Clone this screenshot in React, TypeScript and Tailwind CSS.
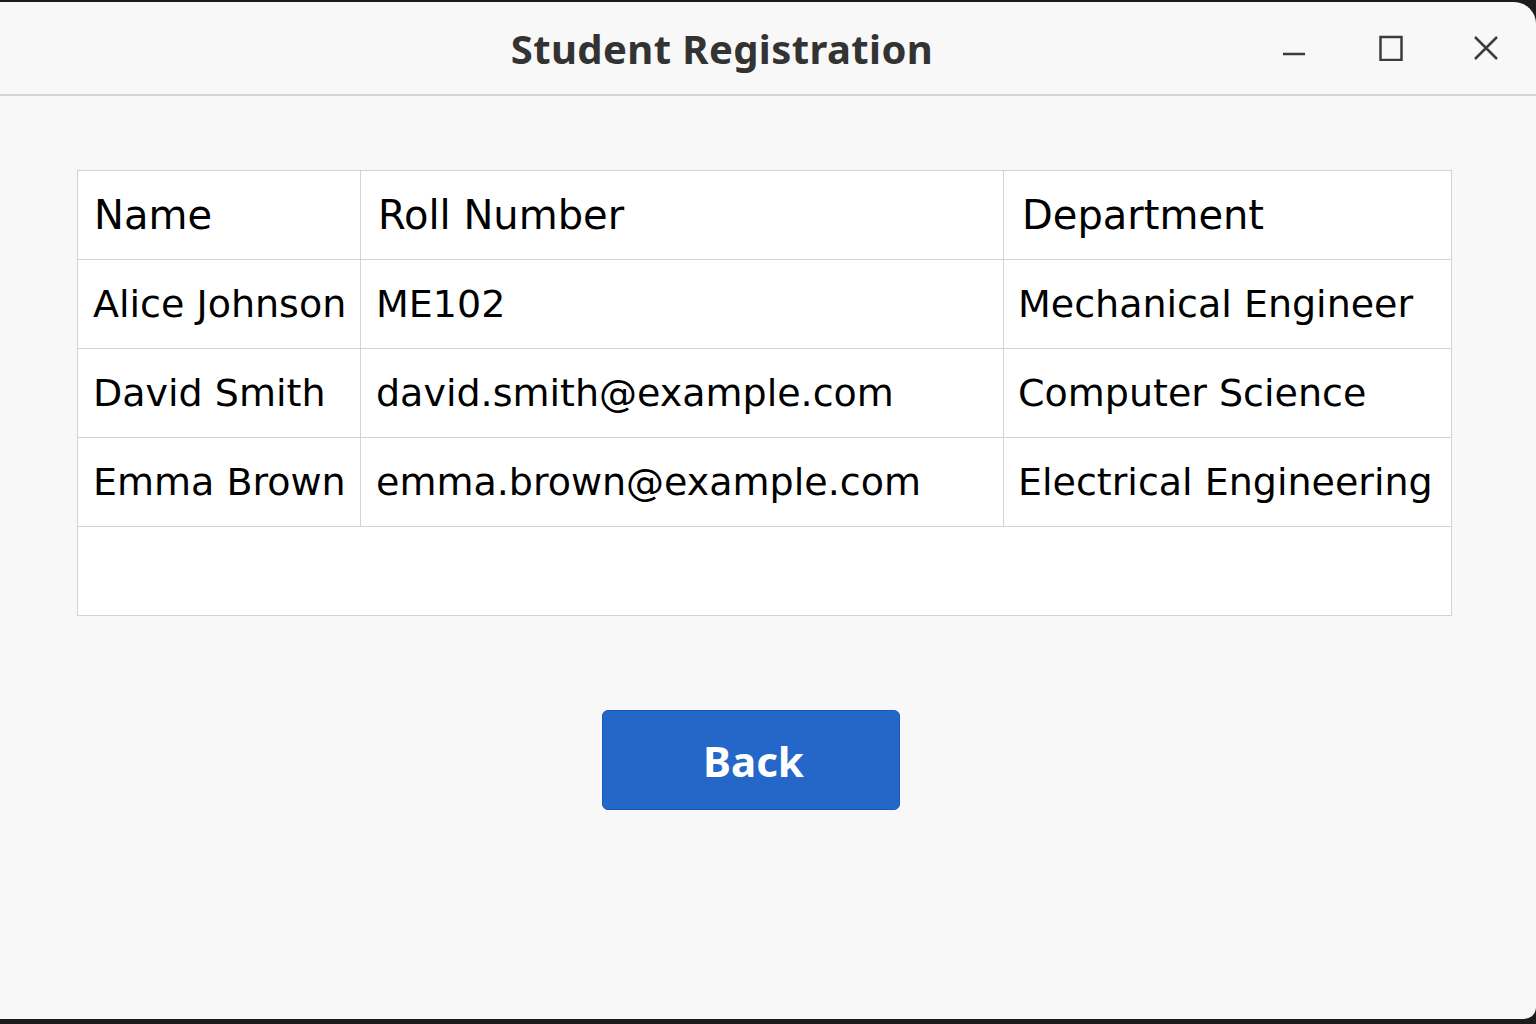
import React from "react";

// ─── Data ───────────────────────────────────────────────────────────────────
const HEADERS = ["Name", "Roll Number", "Department"];
const STUDENTS = [
  { name: "Alice Johnson", roll: "ME102", dept: "Mechanical Engineer" },
  { name: "David Smith", roll: "david.smith@example.com", dept: "Computer Science" },
  { name: "Emma Brown", roll: "emma.brown@example.com", dept: "Electrical Engineering" },
];

const cell = "h-[89px] border border-[#d2d2d2] align-middle whitespace-nowrap";

// ─── Title bar ──────────────────────────────────────────────────────────────
const TitleBar = () => (
  <div className="relative flex h-[94px] items-center justify-center border-b-2 border-[#d6d6d6]">
    <h1 className="ml-[-92px] mt-[2px] font-['Noto_Sans',sans-serif] text-[40px] font-bold tracking-[0.4px] text-[#333333]">
      Student Registration
    </h1>
    <div className="absolute right-[38px] top-[33px] flex items-center text-[#3c3c3c]">
      <svg width="24" height="26" viewBox="0 0 24 26">
        <line x1="1" y1="19" x2="23" y2="19" stroke="currentColor" strokeWidth="2.5" />
      </svg>
      <svg className="ml-[73px]" width="24" height="26" viewBox="0 0 24 26">
        <rect x="1.5" y="2" width="21" height="23" fill="none" stroke="currentColor" strokeWidth="2.5" />
      </svg>
      <svg className="ml-[71px]" width="24" height="26" viewBox="0 0 24 26">
        <path d="M1 2 L23 24 M23 2 L1 24" stroke="currentColor" strokeWidth="2.5" />
      </svg>
    </div>
  </div>
);

// ─── Main ───────────────────────────────────────────────────────────────────
export default function App() {
  return (
    <div className="h-[1024px] w-[1536px] overflow-hidden bg-[#1c1c1c] pt-[2px]">
      <div className="h-[1017px] rounded-tr-[22px] rounded-br-[12px] bg-[#f8f8f8]">
        <TitleBar />

        <div className="px-[77px] pt-[74px]">
          <table className="w-[1374px] table-fixed border-collapse border border-[#d2d2d2] bg-white font-['DejaVu_Sans',sans-serif] text-[38px] text-black">
            <colgroup>
              <col className="w-[283px]" />
              <col className="w-[643px]" />
              <col className="w-[448px]" />
            </colgroup>
            <thead>
              <tr>
                <th className={`${cell} pl-[16px] text-left text-[40px] font-normal`}>{HEADERS[0]}</th>
                <th className={`${cell} pl-[17px] text-left text-[40px] font-normal`}>{HEADERS[1]}</th>
                <th className={`${cell} pl-[18px] text-left text-[40px] font-normal`}>{HEADERS[2]}</th>
              </tr>
            </thead>
            <tbody>
              {STUDENTS.map((s) => (
                <tr key={s.name}>
                  <td className={`${cell} pl-[15px]`}>{s.name}</td>
                  <td className={`${cell} pl-[15px]`}>{s.roll}</td>
                  <td className={`${cell} pl-[14px]`}>{s.dept}</td>
                </tr>
              ))}
              <tr>
                <td colSpan={3} className="h-[89px] border border-[#d2d2d2]" />
              </tr>
            </tbody>
          </table>

          <div className="flex justify-center pt-[94px]">
            <button className="ml-[-35px] h-[100px] w-[298px] rounded-[6px] border border-[#1a57bd] bg-[#2467c8] pl-[6px] font-['Noto_Sans',sans-serif] text-[42px] font-bold text-white">
              Back
            </button>
          </div>
        </div>
      </div>
    </div>
  );
}
